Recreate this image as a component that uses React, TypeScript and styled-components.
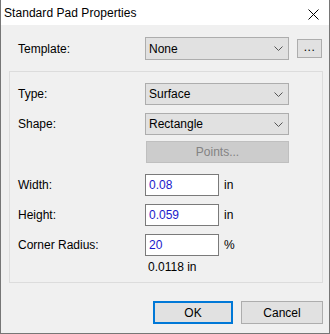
import styled, { createGlobalStyle } from "styled-components";

const GlobalStyle = createGlobalStyle`
  html, body {
    margin: 0;
    padding: 0;
    background: #ffffff;
  }
  * {
    box-sizing: border-box;
  }
`;

const Window = styled.div`
  width: 330px;
  height: 334px;
  border: 1px solid #767676;
  border-top: none;
  background: #f0f0f0;
  display: flex;
  flex-direction: column;
  font-family: "Liberation Sans", Arial, sans-serif;
  font-size: 12px;
  color: #000000;
`;

const TitleBar = styled.div`
  height: 25px;
  background: #ffffff;
  display: flex;
  align-items: center;
  justify-content: space-between;
  padding-left: 3px;
  padding-right: 10px;
`;

const Title = styled.span`
  font-size: 12px;
  letter-spacing: 0.05px;
`;

const CloseIcon = styled.svg`
  width: 11px;
  height: 11px;
  margin-top: 3px;
`;

const Body = styled.div`
  flex: 1;
  padding: 12px 6px 0 8px;
  display: flex;
  flex-direction: column;
`;

const Row = styled.div<{ $mt?: number }>`
  display: flex;
  align-items: center;
  height: 22px;
  margin-top: ${(p) => p.$mt ?? 0}px;
`;

const TemplateRow = styled(Row)`
  height: 23px;
  padding-left: 9px;
`;

const Label = styled.span`
  width: 127px;
  flex-shrink: 0;
`;

const Combo = styled.div<{ $h?: number }>`
  width: 144px;
  height: ${(p) => p.$h ?? 22}px;
  background: #e1e1e1;
  border: 1px solid #adadad;
  display: flex;
  align-items: center;
  justify-content: space-between;
  padding: 0 5px 0 3px;
`;

const Chevron = styled.svg`
  width: 9px;
  height: 5px;
`;

const DotsButton = styled.div`
  width: 25px;
  height: 19px;
  margin-left: 8px;
  background: #e1e1e1;
  border: 1px solid #adadad;
  display: flex;
  align-items: center;
  justify-content: center;
  padding-bottom: 3px;
  letter-spacing: 0.5px;
`;

const Group = styled.div`
  margin-top: 11px;
  height: 212px;
  border: 1px solid #dcdcdc;
  padding: 11px 0 0 8px;
  display: flex;
  flex-direction: column;
`;

const PointsButton = styled.div`
  width: 143px;
  height: 22px;
  margin-left: 128px;
  margin-top: 6px;
  background: #cccccc;
  border: 1px solid #bfbfbf;
  color: #838383;
  display: flex;
  align-items: center;
  justify-content: center;
`;

const Input = styled.div`
  width: 74px;
  height: 22px;
  background: #ffffff;
  border: 1px solid #7a7a7a;
  color: #1a1acb;
  display: flex;
  align-items: center;
  padding-left: 3px;
`;

const Unit = styled.span`
  margin-left: 5px;
`;

const Result = styled.div`
  margin-top: 4px;
  padding-left: 130px;
  line-height: 14px;
`;

const Footer = styled.div`
  margin-top: 18px;
  display: flex;
  justify-content: flex-end;
  gap: 8px;
`;

const Button = styled.div<{ $primary?: boolean; $w: number }>`
  width: ${(p) => p.$w}px;
  height: 23px;
  background: #e1e1e1;
  border: ${(p) => (p.$primary ? "2px solid #0078d7" : "1px solid #adadad")};
  display: flex;
  align-items: center;
  justify-content: center;
`;

function Dropdown({ value, h }: { value: string; h?: number }) {
  return (
    <Combo $h={h}>
      <span>{value}</span>
      <Chevron viewBox="0 0 9 5">
        <polyline points="0.5,0.5 4.5,4.5 8.5,0.5" fill="none" stroke="#555" strokeWidth="1" />
      </Chevron>
    </Combo>
  );
}

export default function App() {
  return (
    <>
      <GlobalStyle />
      <Window>
        <TitleBar>
          <Title>Standard Pad Properties</Title>
          <CloseIcon viewBox="0 0 11 11">
            <path d="M0.5 0.5 L10.5 10.5 M10.5 0.5 L0.5 10.5" stroke="#000" strokeWidth="1" />
          </CloseIcon>
        </TitleBar>
        <Body>
          <TemplateRow>
            <Label>Template:</Label>
            <Dropdown value="None" h={23} />
            <DotsButton>...</DotsButton>
          </TemplateRow>
          <Group>
            <Row>
              <Label>Type:</Label>
              <Dropdown value="Surface" />
            </Row>
            <Row $mt={8}>
              <Label>Shape:</Label>
              <Dropdown value="Rectangle" />
            </Row>
            <PointsButton>Points...</PointsButton>
            <Row $mt={11}>
              <Label>Width:</Label>
              <Input>0.08</Input>
              <Unit>in</Unit>
            </Row>
            <Row $mt={8}>
              <Label>Height:</Label>
              <Input>0.059</Input>
              <Unit>in</Unit>
            </Row>
            <Row $mt={8}>
              <Label>Corner Radius:</Label>
              <Input>20</Input>
              <Unit>%</Unit>
            </Row>
            <Result>0.0118 in</Result>
          </Group>
          <Footer>
            <Button $primary $w={80}>OK</Button>
            <Button $w={82}>Cancel</Button>
          </Footer>
        </Body>
      </Window>
    </>
  );
}
